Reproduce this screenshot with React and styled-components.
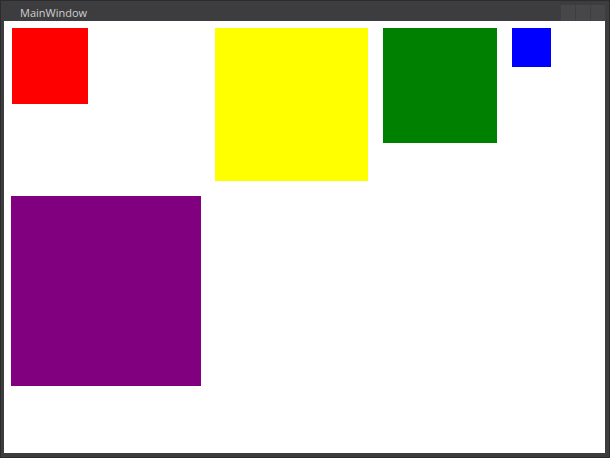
import React from "react";
import styled, { createGlobalStyle } from "styled-components";

const Global = createGlobalStyle`
  html, body { margin: 0; padding: 0; background: #3c3c3c; }
  #root { width: 610px; height: 458px; }
`;

const Window = styled.div`
  width: 610px;
  height: 458px;
  box-sizing: border-box;
  background: #3d3d40;
  border: 1px solid #2b2b2b;
  display: flex;
  flex-direction: column;
  overflow: hidden;
`;

const TitleBar = styled.div`
  height: 20px;
  display: flex;
  align-items: center;
  padding-left: 19px;
  padding-right: 4px;
  background: #3d3d40;
`;

const Title = styled.span`
  font-family: "Open Sans", "Noto Sans", sans-serif;
  font-size: 11px;
  color: #cfcfcf;
  flex: 1;
  margin-top: 3px;
`;

const Controls = styled.div`
  display: flex;
  gap: 1px;
  align-self: flex-start;
  margin-top: 4px;
`;

const CtrlButton = styled.div`
  width: 14px;
  height: 16px;
  background: #47474a;
`;

const Content = styled.div`
  flex: 1;
  background: #ffffff;
  margin: 0 4px 4px 3px;
  padding: 7px 0 0 7px;
  display: flex;
  flex-direction: column;
  gap: 15px;
`;

const Row = styled.div`
  display: flex;
  align-items: flex-start;
  gap: 15px;
`;

const Tile = styled.div`
  width: ${(p) => p.$w}px;
  height: ${(p) => p.$h}px;
  background: ${(p) => p.$color};
  margin-left: ${(p) => p.$offset || 0}px;
  flex: none;
`;

export default function App() {
  return (
    <>
      <Global />
      <Window>
        <TitleBar>
          <Title>MainWindow</Title>
          <Controls>
            <CtrlButton />
            <CtrlButton />
            <CtrlButton />
          </Controls>
        </TitleBar>
        <Content>
          <Row>
            <Tile $w={76} $h={76} $color="#ff0000" $offset={1} />
            <Tile $w={97} $h={1} $color="transparent" />
            <Tile $w={153} $h={153} $color="#ffff00" />
            <Tile $w={114} $h={115} $color="#008000" />
            <Tile $w={39} $h={39} $color="#0000ff" />
          </Row>
          <Row>
            <Tile $w={190} $h={190} $color="#800080" />
          </Row>
        </Content>
      </Window>
    </>
  );
}
